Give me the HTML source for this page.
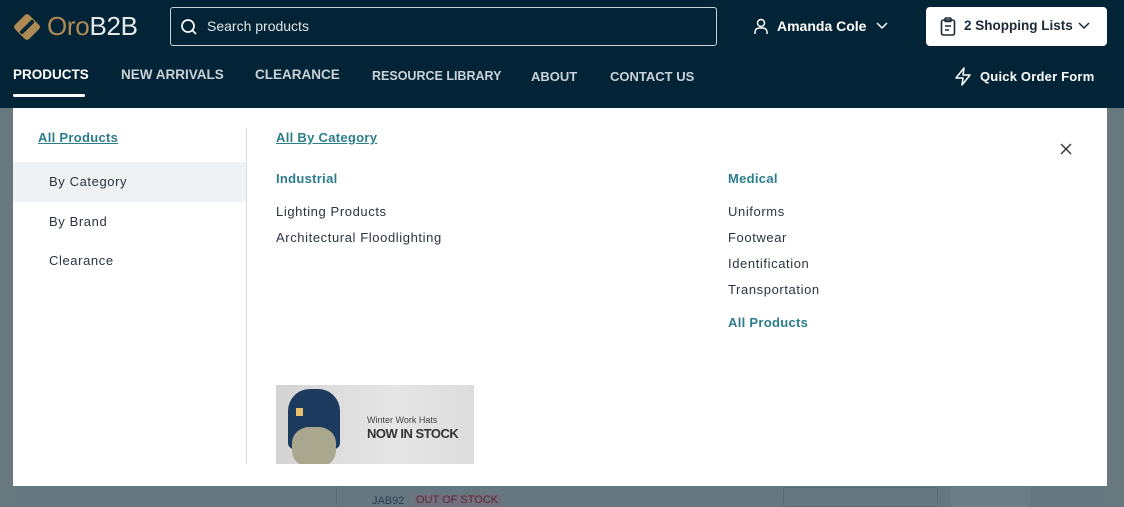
<!DOCTYPE html>
<html><head><meta charset="utf-8"><style>
*{box-sizing:border-box;margin:0;padding:0}
body{width:1124px;height:505px;overflow:hidden;background:#67797f;font-family:"Liberation Sans",sans-serif;position:relative}
.hdr{position:absolute;left:0;top:0;width:1124px;height:108px;background:#032436}
.abs{position:absolute;white-space:nowrap}
.nav{color:#c9d2d8;font-weight:bold;font-size:13px;top:69px}
.menu{position:absolute;left:13px;top:108px;width:1094px;height:378px;background:#fff}
.teal{color:#2b7d8c;font-weight:bold;font-size:13px;letter-spacing:0.3px}
.item{color:#2a3440;font-size:13px;letter-spacing:0.6px}
</style></head><body>
<div class="hdr">
 <svg class="abs" style="left:12px;top:12px" width="30" height="30" viewBox="0 0 30 30"><rect x="5" y="5" width="20" height="20" rx="3" transform="rotate(45 15 15)" fill="#b08a55"/><path d="M10 20 L20 10" stroke="#032436" stroke-width="4" stroke-linecap="round"/></svg>
 <div class="abs" style="left:47px;top:11px;font-size:26px;color:#b08a55;letter-spacing:-0.3px">Oro<span style="color:#e6e9ec">B2B</span></div>
 <div class="abs" style="left:170px;top:7px;width:547px;height:39px;border:1px solid #c9d2d8;border-radius:3px"></div>
 <svg class="abs" style="left:180px;top:18px" width="18" height="18" viewBox="0 0 18 18"><circle cx="8" cy="8" r="6" fill="none" stroke="#fff" stroke-width="1.7"/><path d="M12.5 12.5 L16 16" stroke="#fff" stroke-width="1.7"/></svg>
 <div class="abs" style="left:207px;top:18px;font-size:14px;color:#e0e5e8">Search products</div>
 <svg class="abs" style="left:752px;top:17px" width="18" height="18" viewBox="0 0 18 18" fill="none" stroke="#fff" stroke-width="1.5"><circle cx="9" cy="6" r="3.5"/><path d="M3 17 v-2 a4 4 0 0 1 4-4 h4 a4 4 0 0 1 4 4 v2"/></svg>
 <div class="abs" style="left:777px;top:18px;font-size:14px;font-weight:bold;color:#fff">Amanda Cole</div>
 <svg class="abs" style="left:876px;top:22px" width="12" height="8" viewBox="0 0 12 8"><path d="M1 1 L6 6 L11 1" fill="none" stroke="#fff" stroke-width="1.5"/></svg>
 <div class="abs" style="left:926px;top:7px;width:181px;height:39px;background:#fff;border-radius:4px"></div>
 <svg class="abs" style="left:940px;top:17px" width="16" height="19" viewBox="0 0 16 19" fill="none" stroke="#1c2a36" stroke-width="1.6"><rect x="1.5" y="3" width="13" height="15" rx="2"/><rect x="5" y="1" width="6" height="3.5" rx="1"/><path d="M5 9h6M5 13h4"/></svg>
 <div class="abs" style="left:964px;top:18px;font-size:13.5px;font-weight:bold;color:#1c2a36">2 Shopping Lists</div>
 <svg class="abs" style="left:1078px;top:22px" width="12" height="8" viewBox="0 0 12 8"><path d="M1 1 L6 6 L11 1" fill="none" stroke="#1c2a36" stroke-width="1.5"/></svg>
 <div class="abs nav" style="left:13px;top:67px;color:#fff;font-size:13.5px">PRODUCTS</div>
 <div class="abs" style="left:13px;top:94px;width:72px;height:3px;background:#fff;border-radius:2px"></div>
 <div class="abs nav" style="left:121px;top:67px;font-size:13.5px">NEW ARRIVALS</div>
 <div class="abs nav" style="left:255px;top:67px;font-size:13.5px">CLEARANCE</div>
 <div class="abs nav" style="left:372px;font-size:12.5px">RESOURCE LIBRARY</div>
 <div class="abs nav" style="left:531px">ABOUT</div>
 <div class="abs nav" style="left:610px">CONTACT US</div>
 <svg class="abs" style="left:954px;top:67px" width="18" height="19" viewBox="0 0 18 19"><path d="M10 1 L2 11 H9 L8 18 L16 8 H9 Z" fill="none" stroke="#fff" stroke-width="1.5" stroke-linejoin="round"/></svg>
 <div class="abs" style="left:980px;top:69px;font-size:13px;font-weight:bold;color:#fff;letter-spacing:0.2px">Quick Order Form</div>
</div>
<div class="abs" style="left:13px;top:486px;width:1094px;height:19px;background:#66787f"></div>
<div class="abs" style="left:336px;top:486px;width:1px;height:19px;background:#5a6b73"></div>
<div class="abs" style="left:783px;top:487px;width:155px;height:20px;border:1px solid #586a72;border-radius:3px"></div>
<div class="abs" style="left:950px;top:487px;width:80px;height:20px;background:#6c7e85;border-radius:3px"></div>
<div class="abs" style="left:372px;top:495px;font-size:11px;color:#2f3d56">JAB92</div>
<div class="abs" style="left:413px;top:494px;font-size:11px;color:#5a2c3a;background:#706f7b;padding:0 3px">OUT OF STOCK</div>
<div class="menu">
 <div class="abs teal" style="left:25px;top:22px;text-decoration:underline">All Products</div>
 <div class="abs" style="left:0;top:54px;width:233px;height:40px;background:#eff2f4"></div>
 <div class="abs item" style="left:36px;top:66px">By Category</div>
 <div class="abs item" style="left:36px;top:106px">By Brand</div>
 <div class="abs item" style="left:36px;top:145px">Clearance</div>
 <div class="abs" style="left:233px;top:20px;width:1px;height:336px;background:#d6dde1"></div>
 <div class="abs teal" style="left:263px;top:22px;text-decoration:underline">All By Category</div>
 <div class="abs teal" style="left:263px;top:63px">Industrial</div>
 <div class="abs item" style="left:263px;top:96px">Lighting Products</div>
 <div class="abs item" style="left:263px;top:122px">Architectural Floodlighting</div>
 <div class="abs teal" style="left:715px;top:63px">Medical</div>
 <div class="abs item" style="left:715px;top:96px">Uniforms</div>
 <div class="abs item" style="left:715px;top:122px">Footwear</div>
 <div class="abs item" style="left:715px;top:148px">Identification</div>
 <div class="abs item" style="left:715px;top:174px">Transportation</div>
 <div class="abs teal" style="left:715px;top:207px">All Products</div>
 <svg class="abs" style="left:1047px;top:35px" width="12" height="12" viewBox="0 0 12 12"><path d="M1 1L11 11M11 1L1 11" stroke="#333" stroke-width="1.4"/></svg>
 <div class="abs" style="left:263px;top:277px;width:198px;height:79px;background:linear-gradient(90deg,#d4d4d4,#e6e6e6 60%,#dcdcdc);overflow:hidden">
  <div class="abs" style="left:12px;top:4px;width:52px;height:60px;background:#1c3a5e;border-radius:22px 22px 6px 6px"></div>
  <div class="abs" style="left:16px;top:42px;width:44px;height:40px;background:#a9a88f;border-radius:40%"></div>
  <div class="abs" style="left:20px;top:23px;width:7px;height:8px;background:#e8c070"></div>
  <div class="abs" style="left:91px;top:30px;font-size:9px;color:#444">Winter Work Hats</div>
  <div class="abs" style="left:91px;top:41px;font-size:13px;font-weight:bold;color:#333;letter-spacing:-0.5px">NOW IN STOCK</div>
 </div>
</div>
</body></html>
